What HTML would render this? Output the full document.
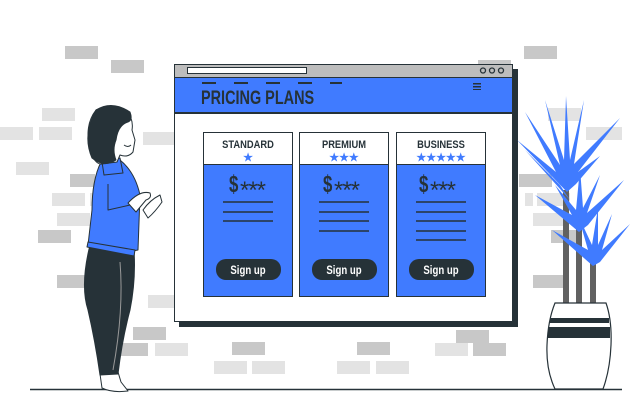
<!DOCTYPE html>
<html><head><meta charset="utf-8"><style>
body{margin:0;width:636px;height:403px;overflow:hidden;background:#fff;font-family:"Liberation Sans",sans-serif;position:relative}
.b{position:absolute;height:13px;background:#c8c8c8}
.l{background:#e3e3e3}
.t{font-family:"Liberation Sans Narrow","Liberation Sans",sans-serif;font-weight:bold;color:#263238}
</style></head><body>
<div class="b" style="left:65px;top:46px;width:33px"></div>
<div class="b" style="left:111px;top:60px;width:33px"></div>
<div class="b l" style="left:42px;top:108px;width:33px"></div>
<div class="b l" style="left:0;top:127px;width:33px"></div>
<div class="b l" style="left:39px;top:127px;width:33px"></div>
<div class="b l" style="left:143px;top:132px;width:33px"></div>
<div class="b l" style="left:16px;top:162px;width:33px"></div>
<div class="b" style="left:70px;top:174px;width:25px"></div>
<div class="b l" style="left:52px;top:193px;width:33px"></div>
<div class="b l" style="left:90px;top:193px;width:33px"></div>
<div class="b l" style="left:57px;top:213px;width:33px"></div>
<div class="b" style="left:38px;top:230px;width:33px"></div>
<div class="b" style="left:57px;top:275px;width:33px"></div>
<div class="b l" style="left:148px;top:295px;width:28px"></div>
<div class="b" style="left:133px;top:327px;width:33px"></div>
<div class="b" style="left:118px;top:343px;width:30px"></div>
<div class="b l" style="left:155px;top:343px;width:33px"></div>
<div class="b" style="left:232px;top:342px;width:33px"></div>
<div class="b l" style="left:214px;top:361px;width:33px"></div>
<div class="b l" style="left:252px;top:361px;width:33px"></div>
<div class="b" style="left:357px;top:342px;width:33px"></div>
<div class="b l" style="left:337px;top:361px;width:33px"></div>
<div class="b l" style="left:376px;top:361px;width:33px"></div>
<div class="b" style="left:456px;top:330px;width:33px"></div>
<div class="b l" style="left:435px;top:343px;width:33px"></div>
<div class="b" style="left:473px;top:343px;width:33px"></div>
<div class="b" style="left:524px;top:46px;width:33px"></div>
<div class="b" style="left:478px;top:60px;width:33px"></div>
<div class="b l" style="left:548px;top:108px;width:33px"></div>
<div class="b l" style="left:586px;top:127px;width:36px"></div>
<div class="b" style="left:519px;top:174px;width:33px"></div>
<div class="b l" style="left:525px;top:193px;width:8px"></div>
<div class="b l" style="left:537px;top:193px;width:33px"></div>
<div class="b l" style="left:533px;top:213px;width:33px"></div>
<div class="b" style="left:551px;top:230px;width:25px"></div>
<div class="b" style="left:533px;top:275px;width:33px"></div>

<div style="position:absolute;left:179px;top:69px;width:339px;height:258px;background:#263238"></div>
<div style="position:absolute;left:174px;top:64px;width:337px;height:256px;background:#fff;border:1px solid #263238"></div>
<div style="position:absolute;left:175px;top:65px;width:337px;height:12px;background:#bdbdbd;border-bottom:1px solid #263238"></div>
<div style="position:absolute;left:187px;top:67px;width:118px;height:5px;background:#fff;border:1px solid #263238"></div>
<div style="position:absolute;left:175px;top:78px;width:337px;height:34px;background:#407bff;border-bottom:2px solid #263238"></div>
<div style="position:absolute;left:202px;top:82px;width:140px;height:2px;background:repeating-linear-gradient(90deg,#263238 0 14px,transparent 14px 32px)"></div>
<div style="position:absolute;left:473px;top:83px;width:8px;height:7px;background:repeating-linear-gradient(#263238 0 1.5px,transparent 1.5px 3px)"></div>
<div class="t" style="position:absolute;left:201px;top:88px;font-size:19px;transform:scaleX(.76);transform-origin:left">PRICING PLANS</div>

<svg style="position:absolute;left:0;top:0" width="636" height="403">
<g fill="none" stroke="#263238" stroke-width="1.3">
<circle cx="483" cy="70.5" r="2.5"/><circle cx="492" cy="70.5" r="2.5"/><circle cx="501" cy="70.5" r="2.5"/>
</g>
<g font-family="Liberation Sans Narrow, Liberation Sans, sans-serif" font-weight="bold">
<g text-anchor="middle">
<rect x="203.5" y="132.5" width="89" height="164" fill="#407bff" stroke="#263238"/>
<rect x="203.5" y="132.5" width="89" height="32" fill="#fff" stroke="#263238"/>
<text x="248" y="148" font-size="11" fill="#263238" transform="translate(248,0) scale(.85,1) translate(-248,0)">STANDARD</text>
<text x="248" y="161" font-size="11" fill="#407bff">★</text>
<path d="M223 202H273M223 212H273M223 221H273" stroke="#263238" stroke-width="1.5"/>
<rect x="216" y="259" width="65" height="21" rx="10" fill="#263238"/>
<text x="248" y="274" font-size="12" fill="#fff" transform="translate(248,0) scale(.8,1) translate(-248,0)">Sign up</text>
</g>
<g text-anchor="middle">
<rect x="299.5" y="132.5" width="89" height="164" fill="#407bff" stroke="#263238"/>
<rect x="299.5" y="132.5" width="89" height="32" fill="#fff" stroke="#263238"/>
<text x="344" y="148" font-size="11" fill="#263238" transform="translate(344,0) scale(.85,1) translate(-344,0)">PREMIUM</text>
<text x="344" y="161" font-size="11" fill="#407bff">★★★</text>
<path d="M319 202H369M319 212H369M319 221H369M319 231H369" stroke="#263238" stroke-width="1.5"/>
<rect x="312" y="259" width="65" height="21" rx="10" fill="#263238"/>
<text x="344" y="274" font-size="12" fill="#fff" transform="translate(344,0) scale(.8,1) translate(-344,0)">Sign up</text>
</g>
<g text-anchor="middle">
<rect x="396.5" y="132.5" width="89" height="164" fill="#407bff" stroke="#263238"/>
<rect x="396.5" y="132.5" width="89" height="32" fill="#fff" stroke="#263238"/>
<text x="441" y="148" font-size="11" fill="#263238" transform="translate(441,0) scale(.85,1) translate(-441,0)">BUSINESS</text>
<text x="441" y="161" font-size="11" fill="#407bff">★★★★★</text>
<path d="M416 202H466M416 212H466M416 221H466M416 231H466M416 240H466" stroke="#263238" stroke-width="1.5"/>
<rect x="409" y="259" width="65" height="21" rx="10" fill="#263238"/>
<text x="441" y="274" font-size="12" fill="#fff" transform="translate(441,0) scale(.8,1) translate(-441,0)">Sign up</text>
</g>
<g fill="#263238">
<text x="229" y="192" font-size="24" transform="translate(229,0) scale(.7,1) translate(-229,0)">$</text>
<text x="240" y="198" font-size="24" font-weight="normal" letter-spacing="-1">***</text>
<text x="323" y="192" font-size="24" transform="translate(323,0) scale(.7,1) translate(-323,0)">$</text>
<text x="334" y="198" font-size="24" font-weight="normal" letter-spacing="-1">***</text>
<text x="419" y="192" font-size="24" transform="translate(419,0) scale(.7,1) translate(-419,0)">$</text>
<text x="430" y="198" font-size="24" font-weight="normal" letter-spacing="-1">***</text>
</g>
</g>

<line x1="30" y1="389.5" x2="622" y2="389.5" stroke="#263238" stroke-width="1.5"/>

<g stroke="#263238" stroke-width="1" stroke-linejoin="round">
<path d="M100 374 L102 388 Q112 393 128 391 L121 382 L118 372 Z" fill="#fff"/>
<path d="M90 245 Q80 285 88 310 Q95 340 100 375 L118 374 Q122 340 130 310 Q136 280 134 250 Z" fill="#263238"/>
<path d="M120 262 Q124 310 113 370" stroke="#999" fill="none"/>
<path d="M101 162 L120 160 Q135 172 140 195 L138 250 Q115 255 88 245 L92 210 Q92 180 101 162 Z" fill="#407bff"/>
<path d="M102 162 L104 175 L123 173 L120 158 Z" fill="#407bff"/>
<path d="M88 242 L135 250 L134 256 L87 247 Z" fill="#407bff"/>
<path d="M108 184 L108 210 L130 205" fill="none"/>
<path d="M128 203 Q140 190 150 193 Q152 198 146 200 L136 212 Z" fill="#fff"/>
<path d="M143 210 Q150 200 160 195 L162 202 Q155 212 148 218 Z" fill="#fff"/>
<path d="M96 110 Q110 103 125 110 Q134 118 132 130 L135 140 L133 152 Q128 158 120 155 L117 162 L102 164 Q95 165 90 150 Q84 125 96 110 Z" fill="#fff"/>
<path d="M96 110 Q112 100 130 112 Q133 120 128 122 Q118 125 116 140 Q112 150 116 160 Q104 168 92 158 Q82 135 96 110 Z" fill="#263238"/>
<path d="M124 145 Q128 148 131 145" fill="none"/>
</g>

<g fill="#616161">
<rect x="563" y="190" width="6" height="114"/>
<rect x="576" y="228" width="6" height="76"/>
<rect x="590" y="262" width="6" height="42"/>
</g>
<g fill="#407bff">
<path d="M567 192 L517 140 L556 172 L525 112 L560 165 L545 100 L564 160 L566 96 L570 160 L584 100 L574 164 L620 118 L578 172 L600 156 L576 184 Z"/>
<path d="M570 200 L525 150 L560 185 Z"/>
<path d="M579 232 L535 195 L572 215 L555 185 L576 210 L580 168 L583 208 L600 175 L587 213 L624 180 L588 225 Z"/>
<path d="M593 266 L552 230 L588 250 L578 215 L592 245 L598 208 L598 245 L612 214 L602 250 L630 224 L600 262 Z"/>
</g>
<path d="M555 303 L606 303 Q612 320 611 345 Q610 370 603 389 L555 389 Q546 370 547 345 Q548 320 555 303 Z" fill="#fff" stroke="#263238" stroke-width="1.2"/>
<path d="M550 318 H609 V323 H550 Z M548 327 H610 V338 H548 Z" fill="#263238"/>
</svg>
</body></html>
